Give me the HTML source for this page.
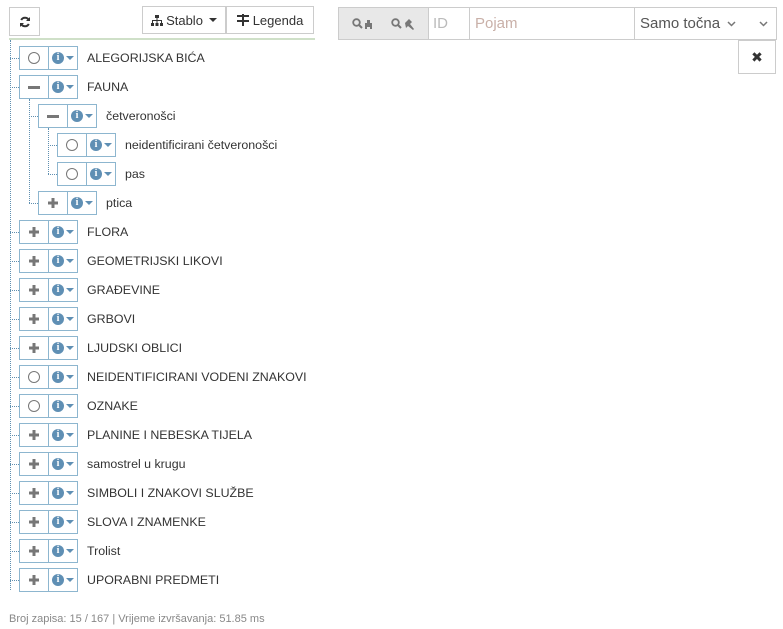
<!DOCTYPE html>
<html><head><meta charset="utf-8"><style>
*{box-sizing:border-box}
body{margin:0;width:783px;height:629px;background:#fff;font-family:"Liberation Sans","DejaVu Sans",sans-serif;color:#333;position:relative;overflow:hidden}
.a{position:absolute}
.btn{position:absolute;border:1px solid #ccc;background:#fff;font-size:13px;display:flex;align-items:center;justify-content:center;color:#333}
.g{position:absolute;height:24px;width:59px;border:1px solid #8db6cf;display:flex}
.g .l{width:29px;border-right:1px solid #8db6cf;display:flex;align-items:center;justify-content:center}
.g .r{flex:1;display:flex;align-items:center;justify-content:center;gap:2px}
.t{position:absolute;font-size:12.4px;line-height:16px;color:#333}
.vl{position:absolute;width:0;border-left:1px dotted #5f8fb0}
.hl{position:absolute;height:0;border-top:1px dotted #5f8fb0}
.circ{width:12px;height:12px;border:1px solid #777;border-radius:50%}
.info{width:12px;height:12px;border-radius:50%;background:#5f8fb4;color:#fff;font:bold 10px/12px "Liberation Serif",serif;text-align:center}
.car{width:0;height:0;border-left:4px solid transparent;border-right:4px solid transparent;border-top:4px solid #5f8fb4}
</style></head><body>
<div class="btn" style="left:9px;top:7px;width:31px;height:29px"><svg width="12" height="12" viewBox="0 0 12 12"><path d="M10 4.5A4.3 4.3 0 0 0 2.2 4M2 7.5A4.3 4.3 0 0 0 9.8 8" stroke="#333" stroke-width="2" fill="none"/><path d="M11 1v4H7zM1 11V7h4z" fill="#333"/></svg></div>
<div class="btn" style="left:142px;top:6px;width:84px;height:28px;gap:3px"><svg width="12" height="11" viewBox="0 0 12 11"><rect x="4" y="0" width="4" height="3" fill="#333"/><rect x="0" y="8" width="3" height="3" fill="#333"/><rect x="4.5" y="8" width="3" height="3" fill="#333"/><rect x="9" y="8" width="3" height="3" fill="#333"/><path d="M6 3v5M1.5 8V5.5h9V8" stroke="#333" fill="none"/></svg>Stablo<span class="car" style="border-top-color:#333;margin-left:3px"></span></div>
<div class="btn" style="left:226px;top:6px;width:88px;height:28px;gap:4px"><svg width="12" height="12" viewBox="0 0 12 12"><path d="M0 2h12M0 7h12M6 0v12" stroke="#333" stroke-width="2"/></svg>Legenda</div>
<div class="a" style="left:9px;top:38px;width:306px;height:2px;background:#cfe0c8"></div>

<div class="a" style="left:338px;top:7px;width:439px;height:33px;border:1px solid #ccc;display:flex">
<div style="width:89px;background:#e8e8e8;display:flex;align-items:center;justify-content:space-around;padding:0 4px">
<svg width="22" height="12" viewBox="0 0 22 12"><circle cx="4.5" cy="4.5" r="3.3" stroke="#777" stroke-width="1.8" fill="none"/><path d="M7 7l3 3" stroke="#777" stroke-width="2"/><path d="M15 2h3v3h2v6h-2v-2h-3v2h-2V5h2z" fill="#777"/></svg>
<svg width="24" height="12" viewBox="0 0 24 12"><circle cx="4.5" cy="4.5" r="3.3" stroke="#777" stroke-width="1.8" fill="none"/><path d="M7 7l3 3" stroke="#777" stroke-width="2"/><path d="M14 5l4-4 3 3-2 2 4 5-1 1-5-4-2 2z" fill="#777"/></svg></div>
<div style="width:41px;border-left:1px solid #ccc;color:#bbb;font-size:15px;display:flex;align-items:center;padding-left:4px">ID</div>
<div style="width:165px;border-left:1px solid #ccc;color:#c9b0a8;font-size:15px;display:flex;align-items:center;padding-left:5px">Pojam</div>
<div style="flex:1;border-left:1px solid #ccc;color:#555;font-size:15px;display:flex;align-items:center;padding-left:5px">Samo točna
<svg style="margin-left:7px" width="9" height="6" viewBox="0 0 9 6"><path d="M1 1l3.5 3.5L8 1" stroke="#777" stroke-width="1.5" fill="none"/></svg>
<svg style="margin-left:auto;margin-right:8px" width="9" height="6" viewBox="0 0 9 6"><path d="M1 1l3.5 3.5L8 1" stroke="#777" stroke-width="1.5" fill="none"/></svg></div>
</div>
<div class="btn" style="left:738px;top:40px;width:38px;height:34px;font-weight:bold;font-size:14px">&#10006;</div>

<div class="vl" style="left:10px;top:40px;height:550px"></div>
<div class="vl" style="left:29px;top:99px;height:104px"></div>
<div class="vl" style="left:48px;top:128px;height:46px"></div>

<div id="tree"></div>
<script>
var rows=[[1,'c','ALEGORIJSKA BIĆA'],[1,'m','FAUNA'],[2,'m','četveronošci'],[3,'c','neidentificirani četveronošci'],[3,'c','pas'],[2,'p','ptica'],[1,'p','FLORA'],[1,'p','GEOMETRIJSKI LIKOVI'],[1,'p','GRAĐEVINE'],[1,'p','GRBOVI'],[1,'p','LJUDSKI OBLICI'],[1,'c','NEIDENTIFICIRANI VODENI ZNAKOVI'],[1,'c','OZNAKE'],[1,'p','PLANINE I NEBESKA TIJELA'],[1,'p','samostrel u krugu'],[1,'p','SIMBOLI I ZNAKOVI SLUŽBE'],[1,'p','SLOVA I ZNAMENKE'],[1,'p','Trolist'],[1,'p','UPORABNI PREDMETI']];
var h='';
rows.forEach(function(r,i){var cy=58+29*i,x=19+19*(r[0]-1);
var ic=r[1]=='c'?'<div class="circ"></div>':r[1]=='m'?'<div style="width:12px;height:3px;background:#777"></div>':'<svg width="12" height="12" viewBox="0 0 12 12"><path d="M6 1v10M1 6h10" stroke="#777" stroke-width="3"/></svg>';
h+='<div class="hl" style="left:'+(x-9)+'px;top:'+cy+'px;width:9px"></div>';
h+='<div class="g" style="left:'+x+'px;top:'+(cy-12)+'px"><div class="l">'+ic+'</div><div class="r"><div class="info">i</div><div class="car"></div></div></div>';
h+='<div class="t" style="left:'+(x+68)+'px;top:'+(cy-8)+'px">'+r[2]+'</div>';});
document.getElementById('tree').innerHTML=h;
</script>
<div class="t" style="left:9px;top:611px;font-size:11px;color:#888">Broj zapisa: 15 / 167 | Vrijeme izvršavanja: 51.85 ms</div>
</body></html>
